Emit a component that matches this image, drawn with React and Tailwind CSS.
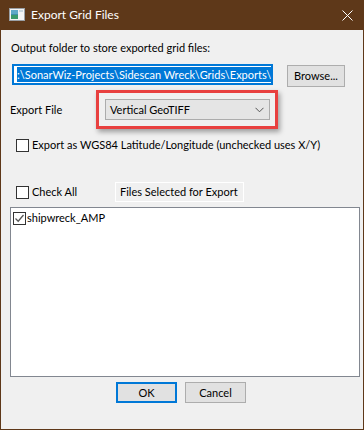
import React from "react";

const font = { fontFamily: 'Lato, "Noto Sans", sans-serif' };

function Check({ checked }) {
  return (
    <div className="w-[13px] h-[13px] border border-[#333333] bg-white flex items-center justify-center shrink-0">
      {checked && (
        <svg width="11" height="11" viewBox="0 0 11 11">
          <path d="M1.5 5.5 L4.2 8.2 L9.5 2" fill="none" stroke="#555555" strokeWidth="1.3" />
        </svg>
      )}
    </div>
  );
}

export default function App() {
  return (
    <div className="w-[364px] h-[430px] bg-[#5e3819] flex flex-col text-[11px] text-black whitespace-nowrap" style={font}>
      {/* title bar */}
      <div className="h-[30px] flex items-center shrink-0">
        <svg width="16" height="14" viewBox="0 0 16 14" className="ml-[9px]">
          <rect x="0.5" y="0.5" width="15" height="12" fill="#f4f4f4" stroke="#9aa0a6" />
          <rect x="2" y="2" width="7" height="9" fill="#3f8fa8" />
          <rect x="2" y="2" width="7" height="4" fill="#5fa9c7" />
          <rect x="2" y="7" width="7" height="4" fill="#3b9a6a" />
          <rect x="10" y="2" width="4" height="2" fill="#c9d6de" />
        </svg>
        <span className="ml-[6px] text-white text-[12px] leading-[16px]">Export Grid Files</span>
        <svg width="11" height="11" viewBox="0 0 11 11" className="ml-auto mr-[11px]">
          <path d="M0.5 0.5 L10.5 10.5 M10.5 0.5 L0.5 10.5" stroke="#ffffff" strokeWidth="1" />
        </svg>
      </div>
      {/* body */}
      <div className="flex-1 mx-[1px] mb-[1px] bg-[#f0f0f0] flex flex-col">
        <div className="mt-[10px] ml-[10px] leading-[16px] h-[16px]">Output folder to store exported grid files:</div>
        <div className="mt-[8px] flex items-start">
          <div className="ml-[11px] w-[261px] h-[21px] shrink-0 border-2 border-[#0078d7] bg-white pl-[3px] py-[1px] overflow-hidden flex items-center">
            <span className="bg-[#0078d7] text-white leading-[15px] flex items-center shrink-0">
              :\SonarWiz-Projects\Sidescan Wreck\Grids\Exports\
              <span className="inline-block w-[1px] h-[13px] bg-black ml-[1px]" />
            </span>
          </div>
          <button className="ml-[14px] mt-[1px] w-[58px] h-[22px] shrink-0 border border-[#adadad] bg-[#e1e1e1] leading-[16px]">
            Browse...
          </button>
        </div>
        <div className="mt-[3px] flex items-center">
          <span className="ml-[9px] w-[86px] leading-[16px]">Export File</span>
          <div className="w-[182px] h-[39px] border-[3px] border-[#e8403f] shadow-[2px_3px_5px_rgba(0,0,0,0.35)] pl-[6px] pr-[5px] pt-[6px]">
            <div className="h-[21px] border border-[#acacac] bg-[#e5e5e5] flex items-center pl-[4px] pr-[5px]">
              <span className="leading-[16px]">Vertical GeoTIFF</span>
              <svg width="9" height="6" viewBox="0 0 9 6" className="ml-auto">
                <path d="M0.5 0.8 L4.5 4.8 L8.5 0.8" fill="none" stroke="#555555" strokeWidth="1" />
              </svg>
            </div>
          </div>
        </div>
        <div className="mt-[8px] ml-[15px] flex items-center">
          <Check />
          <span className="ml-[3px] leading-[16px]">Export as WGS84 Latitude/Longitude (unchecked uses X/Y)</span>
        </div>
        <div className="mt-[29px] flex items-center">
          <div className="ml-[15px] flex items-center w-[99px]">
            <Check />
            <span className="ml-[3px] leading-[16px]">Check All</span>
          </div>
          <div className="w-[129px] h-[20px] border border-white pl-[4px] flex items-center leading-[16px]">
            Files Selected for Export
          </div>
        </div>
        <div className="mt-[5px] ml-[9px] w-[350px] h-[170px] border border-[#828790] bg-white px-[2px] pt-[2px]">
          <div className="flex items-center">
            <Check checked />
            <span className="ml-[1px] leading-[16px]">shipwreck_AMP</span>
          </div>
        </div>
        <div className="mt-[5px] flex">
          <button className="ml-[115px] w-[61px] h-[21px] border-2 border-[#0078d7] bg-[#e1e1e1] leading-[16px]">OK</button>
          <button className="ml-[8px] w-[61px] h-[21px] border border-[#adadad] bg-[#e1e1e1] leading-[16px]">Cancel</button>
        </div>
      </div>
    </div>
  );
}
